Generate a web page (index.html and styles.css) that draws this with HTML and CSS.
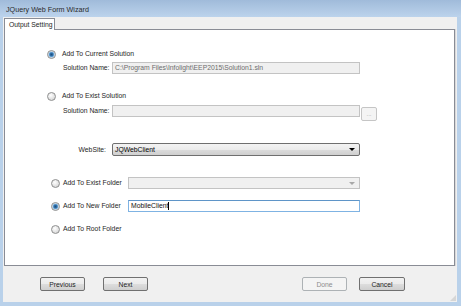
FILE: index.html
```html
<!DOCTYPE html>
<html lang="en">
	<head>
		<meta charset="UTF-8" />
		<title>JQuery Web Form Wizard</title>
		<link rel="stylesheet" href="styles.css">
	</head>
	<body>
		<div class="window">
			<div class="titlebar">JQuery Web Form Wizard</div>
			<div class="client">
				<div class="tabs">
					<div class="tab">Output Setting</div>
				</div>

				<div class="panel">
					<div class="row opt r1">
						<span class="radio checked"></span>
						<span>Add To Current Solution</span>
					</div>
					<div class="row field r2">
						<span class="label">Solution Name:</span>
						<div class="box disabled wide">C:\Program Files\Infolight\EEP2015\Solution1.sln</div>
					</div>

					<div class="row opt r3">
						<span class="radio"></span>
						<span>Add To Exist Solution</span>
					</div>
					<div class="row field r4">
						<span class="label">Solution Name:</span>
						<div class="box disabled wide"></div>
						<div class="browse">...</div>
					</div>

					<div class="row field r5">
						<span class="label">WebSite:</span>
						<div class="box select wide">
							<span>JQWebClient</span>
							<span class="arrow"></span>
						</div>
					</div>

					<div class="row opt2 r6">
						<span class="radio"></span>
						<span class="opt-label">Add To Exist Folder</span>
						<div class="box disabled narrow combo"><span></span><span class="arrow"></span></div>
					</div>
					<div class="row opt2 r7">
						<span class="radio checked"></span>
						<span class="opt-label">Add To New Folder</span>
						<div class="box focused narrow">MobileClient<span class="caret"></span></div>
					</div>
					<div class="row opt2 r8">
						<span class="radio"></span>
						<span class="opt-label">Add To Root Folder</span>
					</div>
				</div>

				<div class="footer">
					<button>Previous</button>
					<button class="next">Next</button>
					<button class="done" disabled>Done</button>
					<button class="cancel">Cancel</button>
					<span class="grip"></span>
				</div>
			</div>
		</div>
	</body>
</html>
```

FILE: styles.css
```css
body {
	margin: 0;
	font-family: "Liberation Sans", Arial, sans-serif;
	font-size: 6.8px;
	color: #1e1e1e;
}
.window {
	width: 461px;
	height: 306px;
	display: flex;
	flex-direction: column;
	background: #b9d1ea;
}
.titlebar {
	height: 17px;
	box-sizing: border-box;
	padding: 2px 0 0 6px;
	line-height: 16px;
	font-size: 7.2px;
	color: #2a2a2a;
	background: linear-gradient(#a0bbda, #bcd3ec);
}
.client {
	flex: 1;
	margin: 0 4px 4px 3px;
	background: #f0f0f0;
	display: flex;
	flex-direction: column;
	position: relative;
	white-space: nowrap;
}
.tabs {
	height: 12px;
	box-sizing: border-box;
	padding: 1px 0 0 1px;
	display: flex;
}
.tab {
	position: relative;
	z-index: 1;
	width: 51px;
	height: 12px;
	box-sizing: border-box;
	margin-bottom: -1px;
	padding-left: 4px;
	line-height: 11px;
	background: #fff;
	border: 1px solid #898c95;
	border-bottom: none;
}
.panel {
	height: 237px;
	box-sizing: border-box;
	margin: 0 2px 0 1px;
	background: #fff;
	border: 1px solid #898c95;
	box-shadow: 1px 0 0 #d9d9d9;
}
.row {
	display: flex;
	align-items: center;
	height: 12px;
	line-height: 12px;
}
.opt {
	padding-left: 42px;
}
.opt .radio {
	margin-right: 6px;
}
.opt2 {
	padding-left: 46px;
}
.opt2 .radio {
	margin-right: 3px;
}
.opt-label {
	width: 65px;
}
.field {
	padding-left: 58px;
}
.label {
	width: 43px;
	margin-right: 6px;
	text-align: right;
}
.r1 { margin-top: 18px; }
.r2 { margin-top: 2px; }
.r3 { margin-top: 16px; }
.r4 { margin-top: 3px; }
.r5 { margin-top: 26px; height: 13px; }
.r6 { margin-top: 21px; }
.r7 { margin-top: 11px; }
.r8 { margin-top: 11px; }

.radio {
	width: 9px;
	height: 9px;
	box-sizing: border-box;
	border-radius: 50%;
	border: 1px solid #8e8f8f;
	background: radial-gradient(circle at 40% 35%, #ffffff, #dcdcdc 70%, #c9c9c9);
	flex: none;
}
.radio.checked {
	background: radial-gradient(circle, #1f4f7e 0, #2f6ea6 1.4px, #7fb6e4 2.6px, #e8e8e8 3.3px, #d6d6d6 100%);
}
.box {
	height: 12px;
	box-sizing: border-box;
	padding: 0 2px;
	line-height: 10px;
	border: 1px solid #b3b3b3;
	background: #fff;
	overflow: hidden;
	display: flex;
	align-items: center;
}
.wide {
	width: 248px;
}
.narrow {
	width: 232px;
}
.disabled {
	background: #f0f0f0;
	border-color: #c3c3c3;
	color: #6d6d6d;
}
.focused {
	border-color: #7fb3e3;
	border-top-color: #5f95c8;
	color: #111;
}
.caret {
	width: 1px;
	height: 8px;
	background: #000;
}
.select {
	height: 13px;
	justify-content: space-between;
	padding-right: 4px;
	color: #000;
	border: 1px solid #6f6f6f;
	border-radius: 2px;
	background: linear-gradient(#f3f3f3, #ebebeb 50%, #dcdcdc 51%, #cfcfcf);
}
.combo {
	justify-content: space-between;
	padding-right: 4px;
}
.arrow {
	width: 0;
	height: 0;
	border-left: 3px solid transparent;
	border-right: 3px solid transparent;
	border-top: 3px solid #000;
}
.combo .arrow {
	border-top-color: #a8a8a8;
}
.browse {
	width: 16px;
	height: 14px;
	box-sizing: border-box;
	margin: 2px 0 0 1px;
	align-self: flex-start;
	border: 1px solid #c5c5c5;
	border-radius: 2px;
	background: #f4f4f4;
	color: #a0a0a0;
	text-align: center;
	line-height: 12px;
	font-size: 6px;
}
.footer {
	flex: 1;
	display: flex;
	align-items: flex-start;
	padding: 11px 52px 0 37px;
}
button {
	width: 45px;
	height: 14px;
	padding: 0;
	font-family: "Liberation Sans", Arial, sans-serif;
	font-size: 6.8px;
	color: #1e1e1e;
	border: 1px solid #707070;
	border-radius: 2px;
	background: linear-gradient(#f2f2f2, #ebebeb 50%, #dddddd 51%, #cfcfcf);
}
.next {
	margin-left: 18px;
}
.done {
	margin-left: auto;
	color: #8d8d8d;
	border-color: #adb2b5;
	background: #f4f4f4;
}
.cancel {
	width: 46px;
	margin-left: 12px;
}
.grip {
	position: absolute;
	right: 1px;
	bottom: 1px;
	width: 6px;
	height: 6px;
	background: radial-gradient(circle, #b8b8b8 0.6px, transparent 0.8px) 0 0 / 2px 2px;
	clip-path: polygon(100% 0, 100% 100%, 0 100%);
}
```
